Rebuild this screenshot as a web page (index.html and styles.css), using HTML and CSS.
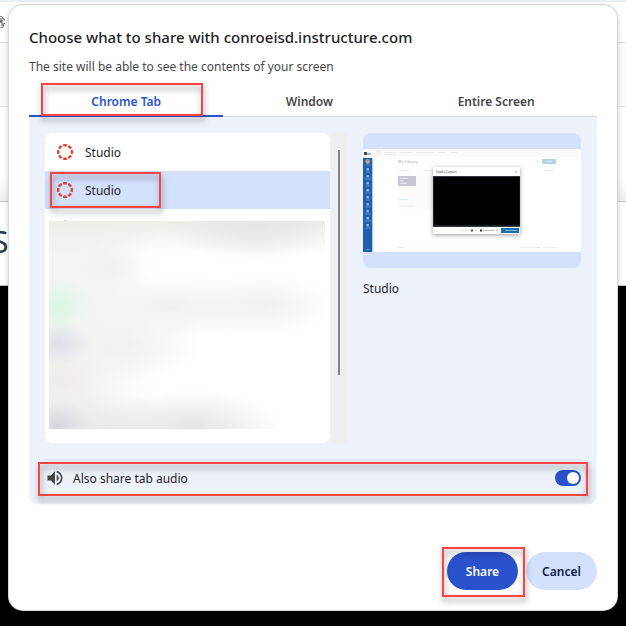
FILE: index.html
```html
<!DOCTYPE html>
<html lang="en">
<head>
    <meta charset="UTF-8">
    <meta name="viewport" content="width=device-width, initial-scale=1.0">
    <title>Choose what to share</title>
    <link rel="stylesheet" href="styles.css">
</head>
<body>
    <!-- Page behind the dialog -->
    <div class="page">
        <div class="page-strip"></div>
        <div class="page-toolbar">
            <svg class="page-icon" width="12" height="12" viewBox="0 0 12 12" fill="none" stroke="#555">
                <path d="M6 1a2.500 2.500 0 0 1 4 2 2.500 2.500 0 0 1 0 5 2.500 2.500 0 0 1-4 3 2.500 2.500 0 0 1-4-2 2.500 2.500 0 0 1 0-5 2.500 2.500 0 0 1 4-3z"/>
                <path d="M4 3l5 3v4M10 4L5 7v4M8 2v5"/>
            </svg>
        </div>
        <div class="page-bar"></div>
        <div class="page-body"></div>
        <div class="page-heading">S</div>
        <div class="page-video"></div>
    </div>

    <div class="dialog" role="dialog" aria-labelledby="title">
        <h1 id="title">Choose what to share with conroeisd.instructure.com</h1>
        <p class="subtitle">The site will be able to see the contents of your screen</p>

        <div class="tabs" role="tablist">
            <button type="button" class="tab active" role="tab" aria-selected="true">Chrome Tab<span class="mark mark-tab"></span></button>
            <button type="button" class="tab" role="tab">Window</button>
            <button type="button" class="tab" role="tab">Entire Screen</button>
        </div>

        <div class="panel">
            <div class="sources">
                <div class="source-list">
                    <button type="button" class="source">
                        <svg class="source-icon" width="16" height="16" viewBox="0 0 16 16">
                            <circle class="ring" cx="8" cy="8" r="6.800" pathLength="80"/>
                        </svg>
                        Studio
                    </button>
                    <button type="button" class="source selected">
                        <svg class="source-icon" width="16" height="16" viewBox="0 0 16 16">
                            <circle class="ring" cx="8" cy="8" r="6.800" pathLength="80"/>
                        </svg>
                        Studio
                        <span class="mark mark-source"></span>
                    </button>
                    <div class="source-peek"></div>
                    <div class="redacted"></div>
                </div>
                <div class="scrollbar"><div class="thumb"></div></div>
                <div class="preview">
                    <div class="preview-frame">
                        <svg class="preview-image" viewBox="0 0 218 103">
                            <rect width="218" height="103" fill="#fff"/>
                            <rect width="218" height="8" fill="#fafafa"/>
                            <!-- top navigation -->
                            <rect x="1" y="3" width="3" height="3" fill="#445"/>
                            <rect x="4" y="4" width="4" height="2" fill="#9cbcdc"/>
                            <circle cx="15.500" cy="3.500" r="2" fill="none" stroke="#e2e2e2"/>
                            <path d="M23 3.500h9M36 3.500h13M53 3.500h18M75 3.500h7M88 3.500h6" stroke="#e8e8e8"/>
                            <path d="M23 5.500h9" stroke="#ddd" stroke-width=".6"/>
                            <!-- side navigation -->
                            <rect y="9" width="9.500" height="94" fill="#1f5fae"/>
                            <rect x="9.500" y="9" width="1" height="94" fill="#dbe5f2"/>
                            <circle cx="4.700" cy="12.500" r="2.400" fill="#c09a8a"/>
                            <path d="M2.500 16h5M3 23h4M1.500 30h7M2.500 37h5M2.500 44h5M3 51h4M2.500 58h5M2.500 65h5M1.500 72h7M3 79h4M3 100.500h4" stroke="#6f9cd2" stroke-width=".8"/>
                            <path d="M4.700 19v2.500M4.700 26v2.500M4.700 33v2.500M4.700 40v2.500M4.700 47v2.500M4.700 54v2.500M4.700 61v2.500M4.700 68v2.500M4.700 75v2.500" stroke="#8fb3dd" stroke-width="2.500"/>
                            <!-- library -->
                            <text x="35" y="14" class="tiny-title">My Library</text>
                            <circle cx="175" cy="12.500" r="1.500" fill="none" stroke="#e4e4e4" stroke-width=".6"/>
                            <rect x="179" y="10" width="14" height="5" rx="1" fill="#b3d3e6"/>
                            <path d="M183 12.500h6" stroke="#d8eaf4"/>
                            <path d="M36 21.500h10M57 21.500h1M62 21.500h6M181 21.500h10" stroke="#e8e8e8"/>
                            <rect x="35" y="27" width="35" height="33" fill="#fbfbfb"/>
                            <rect x="35" y="27" width="18" height="10" fill="#c9c5d7"/>
                            <path d="M37 29.500h8M37 32h4M37 34.500h7" stroke="#e9e6f0"/>
                            <path d="M36 50.500h9" stroke="#dcebf1"/>
                            <path d="M36 57h16M35 98.500h6M157 98.500h20M180 98.500h13" stroke="#ebebeb"/>
                            <path d="M34 95.500h160" stroke="#f4f4f4" stroke-width=".5"/>
                            <!-- capture window -->
                            <g class="capture">
                                <rect x="70" y="18" width="87" height="67" fill="#fff"/>
                            </g>
                            <text x="73" y="24" class="tiny-label">Studio Capture</text>
                            <path d="M152 22l2 1.500M154 22l-2 1.500" stroke="#888" stroke-width=".5"/>
                            <rect x="70" y="27" width="87" height="51" fill="#30383d"/>
                            <rect x="70.700" y="28" width="86" height="48.500" fill="#000"/>
                            <path d="M98 81.500h3M102 81.500h2M111 81.500h2" stroke="#ddd"/>
                            <rect x="108" y="80.500" width="2" height="2" fill="#555"/>
                            <rect x="117" y="80.500" width="2" height="2" fill="#333"/>
                            <path d="M120 81.500h12M133 81.500h2" stroke="#bbb"/>
                            <rect x="138" y="79" width="18" height="5" fill="#1b6fae"/>
                            <path d="M142 81.500h12" stroke="#83b3d6"/>
                        </svg>
                    </div>
                    <div class="preview-name">Studio</div>
                </div>
            </div>

            <div class="audio">
                <svg class="audio-icon" width="20" height="20" viewBox="0 0 24 24" fill="#474747">
                    <path d="M3 9v6h4l5 5V4L7 9H3zm13.500 3c0-1.770-1.020-3.290-2.500-4.030v8.050c1.480-.730 2.500-2.250 2.500-4.020zM14 3.230v2.060c2.890.860 5 3.540 5 6.710s-2.110 5.850-5 6.710v2.060c4.010-.910 7-4.490 7-8.770s-2.990-7.860-7-8.770z"/>
                </svg>
                <label for="tabAudio">Also share tab audio</label>
                <input type="checkbox" id="tabAudio" class="switch" checked>
                <span class="mark mark-audio"></span>
            </div>
        </div>

        <div class="actions">
            <button type="button" class="btn btn-primary">Share<span class="mark mark-share"></span></button>
            <button type="button" class="btn">Cancel</button>
        </div>
    </div>
</body>
</html>
```
FILE: styles.css
```css
* {
    box-sizing: border-box;
}

body {
    margin: 0;
    min-height: 100vh;
    background-color: #000;
    font-family: "Noto Sans", "Open Sans", sans-serif;
    font-size: 12px;
    color: #1f1f1f;
    overflow: hidden;
}

button {
    border: none;
    background: none;
    padding: 0;
    font: inherit;
    color: inherit;
    cursor: pointer;
}

/* page behind the dialog */
.page {
    height: 100vh;
    display: flex;
    flex-direction: column;
}

.page-strip {
    height: 2px;
    background-color: #e9eef6;
}

.page-toolbar {
    height: 41px;
    background-color: #fff;
    border-bottom: 1px solid #dcdcdc;
    padding-top: 14px;
}

.page-icon {
    display: block;
    margin-left: -7px;
}

.page-bar {
    height: 64px;
    background-color: #fcfcfc;
    border-bottom: 1px solid #e4e4e4;
}

.page-body {
    height: 95px;
    background: linear-gradient(#fff 75%, #f0f0f0);
    border-bottom: 1px solid #c4c4c4;
}

.page-heading {
    height: 84px;
    background-color: #fff;
    border-bottom: 1px solid #c4c4c4;
    font-size: 30px;
    line-height: 80px;
    color: #2d3b45;
    text-indent: -8px;
}

.page-video {
    flex: 1;
    background-color: #000;
}

/* dialog */
.dialog {
    position: absolute;
    top: 5px;
    left: 9px;
    right: 9px;
    padding: 20px;
    background-color: #fff;
    border-radius: 14px;
    box-shadow: 0 0 0 1px #d6d6d2, 0 2px 6px rgba(0, 0, 0, 0.25);
}

h1 {
    margin: 0;
    font-size: 15px;
    font-weight: 500;
    line-height: 24px;
}

.subtitle {
    margin: 6px 0;
    font-size: 12px;
    line-height: 24px;
    color: #474747;
}

.tabs {
    display: flex;
    border-bottom: 1px solid #d5d7dc;
}

.tab {
    position: relative;
    flex: 1 1 auto;
    height: 31px;
    padding-top: 2px;
    font-weight: 600;
    color: #474747;
}

.tab.active {
    color: #2a52cc;
    box-shadow: 0 1px 0 #2a52cc, inset 0 -1px 0 #2a52cc;
}

.panel {
    padding: 16px 16px 0;
    background-color: #ecf1fa;
    border-radius: 0 0 8px 8px;
}

.sources {
    display: flex;
    padding-bottom: 16px;
    border-bottom: 1px solid #d3dff3;
}

.source-list {
    flex: 1;
    height: 310px;
    display: flex;
    flex-direction: column;
    background-color: #fff;
    border-radius: 8px;
}

.source {
    position: relative;
    flex: none;
    height: 38px;
    padding: 0 12px;
    display: flex;
    align-items: center;
    gap: 12px;
}

.source.selected {
    background-color: #d4e1fc;
}

.ring {
    fill: none;
    stroke: #e2402f;
    stroke-width: 2.400;
    stroke-dasharray: 7 3;
    stroke-dashoffset: 3.500;
}

.source-peek {
    width: 2px;
    height: 1px;
    margin: 11px 0 0 19px;
    background-color: #f5b57a;
}

/* hidden tab names */
.redacted {
    flex: 1;
    margin: 0 5px 14px 4px;
    background:
        radial-gradient(32px 28px at 10px 84px, #d9f7e4, transparent),
        radial-gradient(32px 22px at 10px 122px, #dddfe7, transparent),
        radial-gradient(34px 28px at 8px 206px, #d6d5de, transparent),
        radial-gradient(50px 36px at 10px 162px, #f0ebeb, transparent),
        radial-gradient(34px 30px at 60px 46px, #f0f0f0, transparent),
        radial-gradient(110px 32px at 120px 86px, #f0f0f0, transparent),
        radial-gradient(70px 32px at 215px 84px, #f0f0ef, transparent),
        radial-gradient(80px 36px at 75px 124px, #f0f0f0, transparent),
        radial-gradient(90px 38px at 145px 206px, #e4e4e4, transparent),
        radial-gradient(100px 34px at 45px 206px, #e9e9e7, transparent),
        radial-gradient(90px 34px at 205px 6px, #e5e6e5, transparent),
        linear-gradient(#ecece9, rgba(255, 255, 255, 0) 32px),
        linear-gradient(to right, #f4f4f3 40px, #fff 110px);
}

.scrollbar {
    width: 16px;
    margin: 0 16px 0 1px;
    padding: 17px 7px 0;
    background-color: #efefef;
}

.thumb {
    height: 225px;
    background-color: #868686;
}

.preview {
    width: 218px;
}

.preview-frame {
    padding: 16px 0;
    background-color: #d4e1fc;
    border-radius: 8px;
}

.preview-image {
    display: block;
    width: 100%;
}

.tiny-title {
    font-size: 4px;
    fill: #aaa;
}

.tiny-label {
    font-size: 3px;
    fill: #444;
}

.capture {
    filter: drop-shadow(0 1px 2px rgba(0, 0, 0, 0.4));
}

.preview-name {
    margin-top: 12px;
    line-height: 18px;
}

.audio {
    position: relative;
    height: 44px;
    padding-bottom: 8px;
    display: flex;
    align-items: center;
}

.audio label {
    flex: 1;
    margin-left: 8px;
}

.switch {
    appearance: none;
    width: 26px;
    height: 16px;
    margin: 0;
    padding: 2px;
    display: flex;
    justify-content: flex-end;
    background-color: #2a52cc;
    border-radius: 8px;
}

.switch::before {
    content: "";
    width: 12px;
    height: 12px;
    background-color: #fff;
    border-radius: 50%;
}

.actions {
    display: flex;
    justify-content: flex-end;
    gap: 8px;
    margin-top: 48px;
}

.btn {
    position: relative;
    width: 71px;
    height: 38px;
    border-radius: 19px;
    background-color: #d4e1fc;
    color: #0b1d48;
    font-weight: 600;
}

.btn-primary {
    background-color: #2a52cc;
    color: #fff;
}

/* red call-out frames */
.mark {
    position: absolute;
    border: 2px solid #fa4343;
    filter: drop-shadow(1px 4px 3px rgba(0, 0, 0, 0.45));
    pointer-events: none;
    z-index: 1;
}

.mark-tab {
    top: -2px;
    bottom: 0;
    left: 12px;
    right: 20px;
}

.mark-source {
    top: 1px;
    bottom: 1px;
    left: 5px;
    width: 111px;
}

.mark-audio {
    top: 2px;
    bottom: 8px;
    left: -7px;
    right: -7px;
}

.mark-share {
    top: -5px;
    bottom: -7px;
    left: -5px;
    right: -7px;
}
```
